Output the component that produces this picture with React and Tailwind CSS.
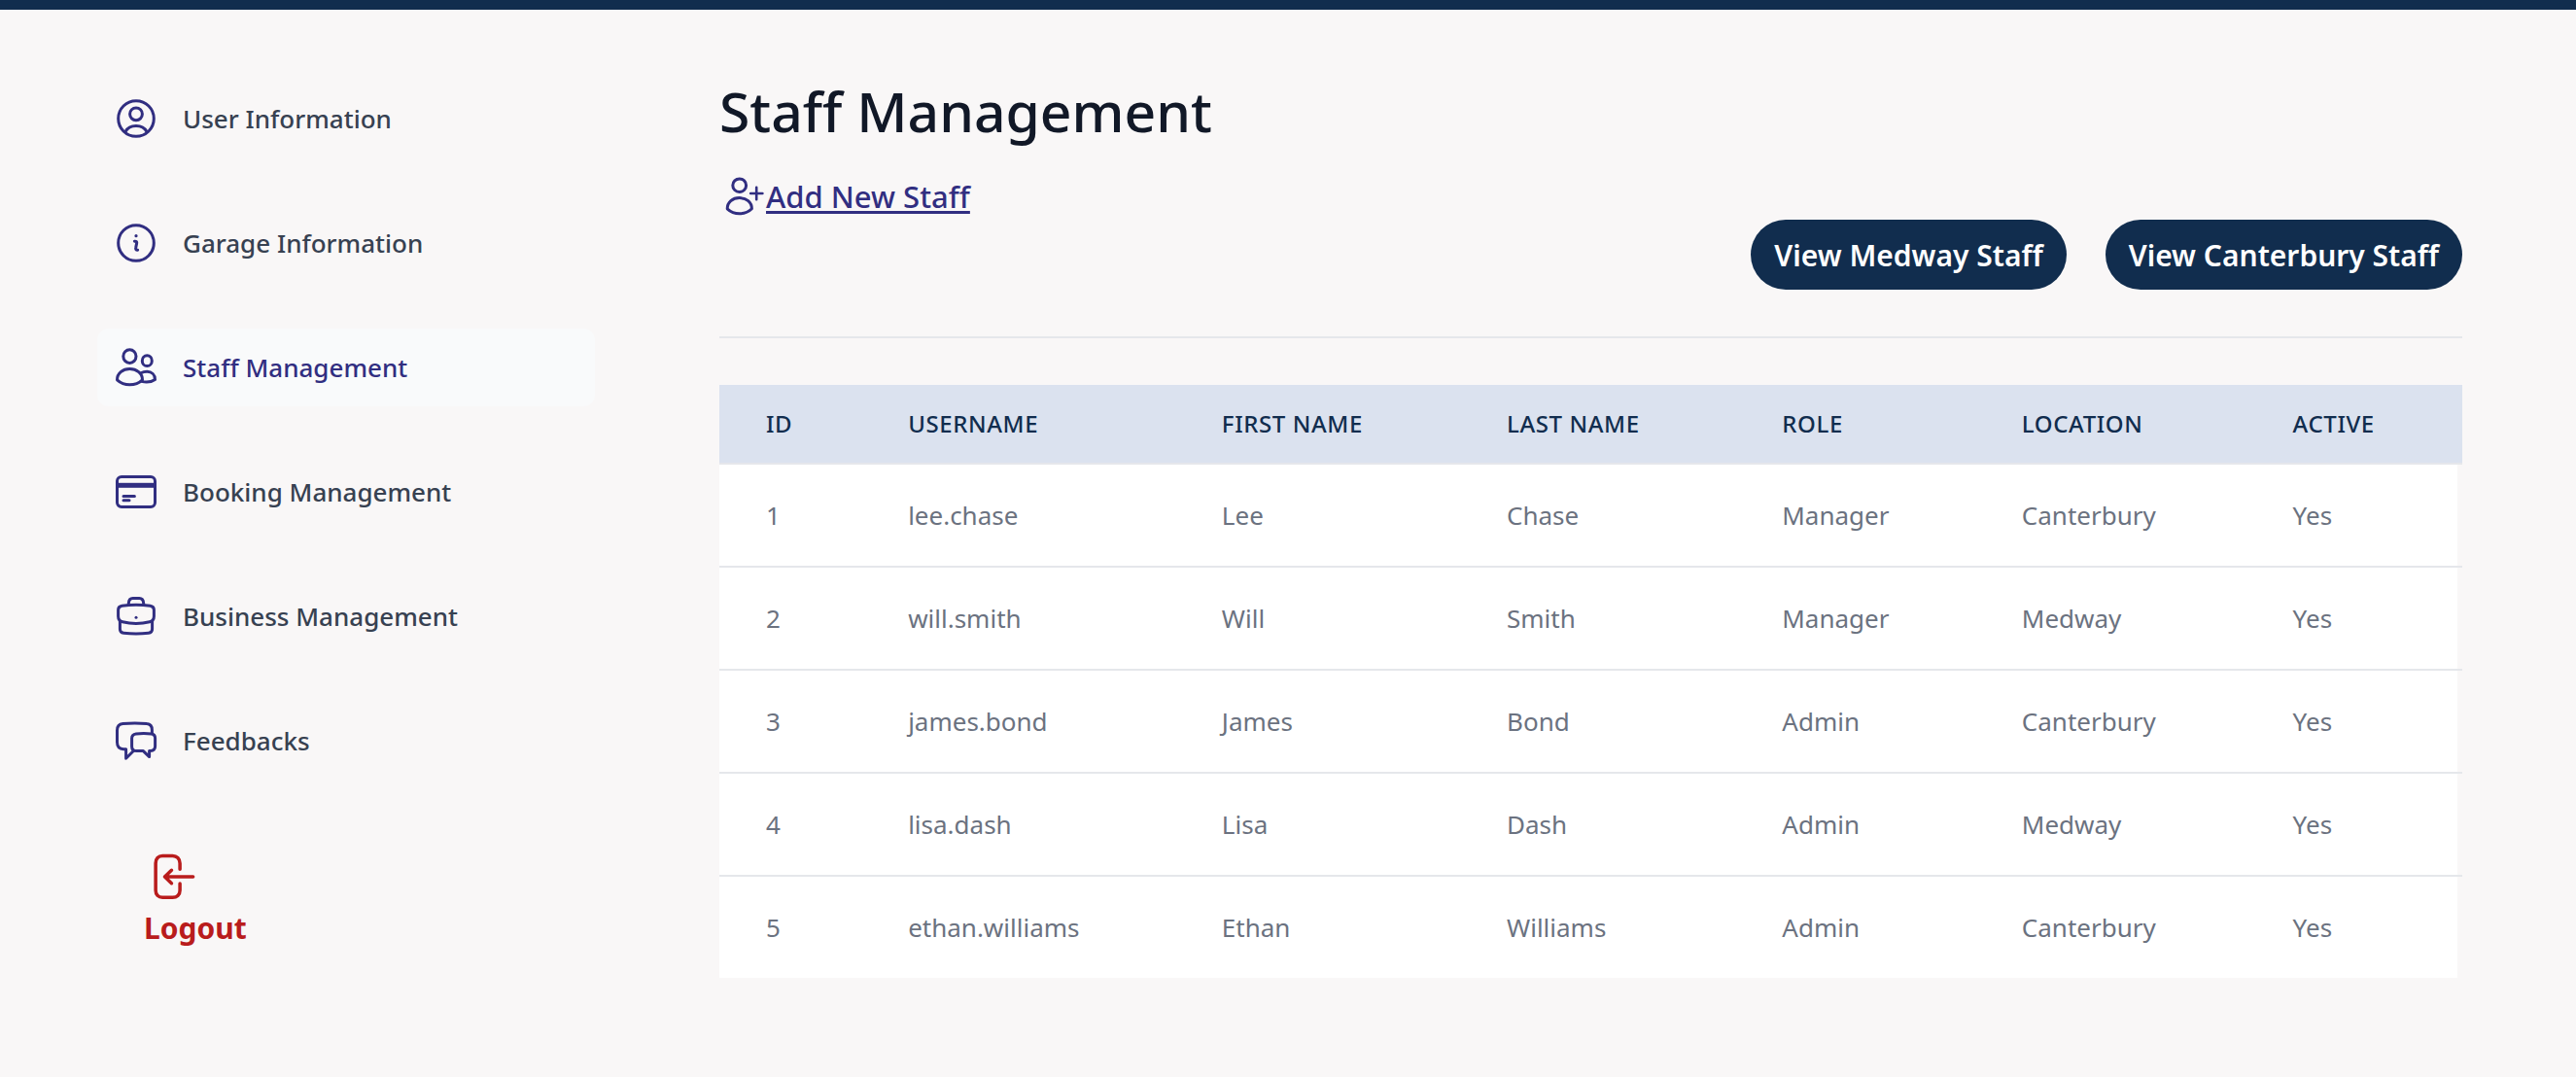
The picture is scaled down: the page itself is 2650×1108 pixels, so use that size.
function Icon({ children, className = "size-12", stroke = 3 }) {
  return (
    <svg
      viewBox="0 0 48 48"
      className={`shrink-0 ${className}`}
      fill="none"
      stroke="currentColor"
      strokeWidth={stroke}
      strokeLinecap="round"
      strokeLinejoin="round"
      aria-hidden="true"
    >
      {children}
    </svg>
  );
}

const UserIcon = () => (
  <Icon>
    <circle cx="24" cy="24" r="18.3" />
    <circle cx="24" cy="19.3" r="6.4" />
    <path d="M13 37.5C15 33.8 19 31.6 24 31.6S33 33.8 35 37.5" />
  </Icon>
);

const InfoIcon = () => (
  <Icon>
    <circle cx="24" cy="24" r="18.3" />
    <circle cx="24" cy="16.7" r="1.6" fill="currentColor" stroke="none" />
    <path d="M22.4 22.2C24.2 22 25 22.8 24.6 24.4L23.8 28.4C23.3 30.4 24 31.3 25.6 31.2" />
  </Icon>
);

const StaffIcon = () => (
  <Icon>
    <ellipse cx="17.4" cy="12.6" rx="6.6" ry="6.8" />
    <path d="M4.5 36.8C4.5 30 10.2 25.6 17.4 25.6S30.5 30 30.5 36.8C26.8 40.4 22.3 41.8 17.4 41.8S8.2 40.2 4.5 36.8Z" />
    <ellipse cx="35.3" cy="17.2" rx="5" ry="5.4" />
    <path d="M29 29.8C30.8 28.8 33 28.3 35.3 28.3C40 28.3 43.5 31.4 43.5 36.4C39.8 39 34.4 39.6 29.6 38.4" />
  </Icon>
);

const CardIcon = () => (
  <Icon>
    <rect x="4.5" y="8.5" width="39" height="31" rx="4.5" />
    <rect x="4.5" y="14.8" width="39" height="5" fill="currentColor" stroke="none" />
    <path d="M11 28.4H22.4M11 32.8H17" />
  </Icon>
);

const BriefcaseIcon = () => (
  <Icon>
    <path d="M16.3 12.2V10.6C16.6 7.2 18.2 5.6 20.6 5.6H27.4C29.8 5.6 31.4 7.2 31.7 10.6V12.2" />
    <path d="M9.5 13.3C19 12 29 12 38.5 13.3C41.4 13.7 42.4 15 42.4 17.6V24C42.4 27.3 41.2 29 38 29.8C29 32 19 32 10 29.8C6.8 29 5.6 27.3 5.6 24V17.6C5.6 15 6.6 13.7 9.5 13.3Z" />
    <path d="M7.4 29V37.2C7.4 39.8 8.6 40.9 11.2 41.2C19.6 42.2 28.4 42.2 36.8 41.2C39.4 40.9 40.6 39.8 40.6 37.2V29" />
    <circle cx="24" cy="25.3" r="1.5" fill="currentColor" stroke="none" />
  </Icon>
);

const ChatIcon = () => (
  <Icon>
    <path d="M40.4 16.2V13C40.4 9 38.6 6.9 35 6.6C26.8 5.7 18.4 5.7 10.4 6.6C6.4 7 4.5 9.2 4.5 13.4V25.6C4.5 30.2 6.6 32.6 11 32.7L13.6 32.8V42.2L21.6 34.2" />
    <path d="M24 17C29 16.4 34.6 16.4 39.6 17C42.2 17.3 43.6 18.8 43.6 21.4V29.8C43.6 32.8 41.8 34.4 38.8 34.5L37.6 34.6V40.6L31.4 34.6H24.4C21.2 34.6 19.6 33 19.6 30V21.6C19.6 18.8 21 17.4 24 17Z" />
  </Icon>
);

const AddUserIcon = () => (
  <Icon>
    <ellipse cx="20.7" cy="12.7" rx="6.9" ry="6.8" />
    <path d="M8.2 36.8C8.2 30 13.6 25.6 20.7 25.6S33.4 30 33.4 36.8C29.8 40.4 25.5 41.8 20.7 41.8S11.8 40.2 8.2 36.8Z" />
    <path d="M38.2 14.8V27.2M32.2 21H44.4" strokeWidth="2.6" />
  </Icon>
);

const LogoutIcon = () => (
  <Icon className="size-14" stroke={3}>
    <path d="M31.8 17.4V12.2C31.8 8 29 5.6 25.4 5.6H16.4C12.8 5.6 10.4 8 10.4 12V36C10.4 40 12.8 42.2 16.4 42.2H25.4C29 42.2 31.8 40 31.8 36V30" />
    <path d="M43.4 24H18.4M24.4 18.2L18.4 24L24.4 29.8" />
  </Icon>
);

const nav = [
  { label: "User Information", icon: UserIcon },
  { label: "Garage Information", icon: InfoIcon },
  { label: "Staff Management", icon: StaffIcon, active: true },
  { label: "Booking Management", icon: CardIcon },
  { label: "Business Management", icon: BriefcaseIcon },
  { label: "Feedbacks", icon: ChatIcon },
];

const columns = [
  { label: "ID", width: "w-[8.15%]" },
  { label: "Username", width: "w-[18%]" },
  { label: "First Name", width: "w-[16.35%]" },
  { label: "Last Name", width: "w-[15.8%]" },
  { label: "Role", width: "w-[13.75%]" },
  { label: "Location", width: "w-[15.55%]" },
  { label: "Active", width: "w-[12.4%]" },
];

const staff = [
  ["1", "lee.chase", "Lee", "Chase", "Manager", "Canterbury", "Yes"],
  ["2", "will.smith", "Will", "Smith", "Manager", "Medway", "Yes"],
  ["3", "james.bond", "James", "Bond", "Admin", "Canterbury", "Yes"],
  ["4", "lisa.dash", "Lisa", "Dash", "Admin", "Medway", "Yes"],
  ["5", "ethan.williams", "Ethan", "Williams", "Admin", "Canterbury", "Yes"],
];

function Sidebar() {
  return (
    <aside className="w-[512px] shrink-0 pt-[72px]">
      <nav className="flex flex-col gap-12">
        {nav.map(({ label, icon: Glyph, active }) => (
          <a
            key={label}
            href="#"
            aria-current={active ? "page" : undefined}
            className={`flex items-center gap-6 rounded-xl p-4 text-[26px] leading-[48px] font-medium ${
              active ? "bg-[#f9fafb] text-[#312e81]" : "text-[#374151]"
            }`}
          >
            <span className="text-[#312e81]">
              <Glyph />
            </span>
            {label}
          </a>
        ))}
      </nav>
      <button
        type="button"
        className="mt-[72px] ml-12 flex flex-col items-start text-[30px] leading-[50px] font-bold text-[#b91c1c]"
      >
        <LogoutIcon />
        Logout
      </button>
    </aside>
  );
}

function StaffTable() {
  return (
    <table className="mt-12 w-full table-fixed border-separate border-spacing-0 text-left">
      <thead className="bg-[#dbe2ef]">
        <tr>
          {columns.map(({ label, width }) => (
            <th
              key={label}
              scope="col"
              className={`${width} border-b-2 border-[#e5e7eb] py-6 pl-12 text-2xl leading-8 font-medium tracking-wide text-[#112d4e] uppercase`}
            >
              {label}
            </th>
          ))}
        </tr>
      </thead>
      <tbody>
        {staff.map((row, r) => (
          <tr key={row[0]}>
            {row.map((value, c) => (
              <td
                key={c}
                className={`py-8 pl-12 text-[26px] leading-10 text-[#6b7280] ${
                  r < staff.length - 1 ? "border-b-2 border-[#e5e7eb]" : ""
                } ${
                  c === row.length - 1
                    ? "bg-linear-to-r from-white to-white bg-[length:calc(100%_-_5px)_100%] bg-no-repeat"
                    : "bg-white"
                }`}
              >
                {value}
              </td>
            ))}
          </tr>
        ))}
      </tbody>
    </table>
  );
}

export default function App() {
  return (
    <div className="min-h-screen border-t-[10px] border-[#112d4e] bg-[#f9f7f7] font-['Noto_Sans',sans-serif]">
      <div className="flex gap-32 pr-[117px] pb-16 pl-[100px]">
        <Sidebar />
        <main className="min-w-0 flex-1 pt-[68px]">
          <header className="border-b-2 border-[#e5e7eb] pb-12">
            <h1 className="text-[57px] leading-[72px] font-medium text-[#111827]">
              Staff Management
            </h1>
            <a
              href="#"
              className="mt-7 flex w-fit items-center text-[31px] leading-[48px] font-medium text-[#312e81]"
            >
              <AddUserIcon />
              <span className="underline decoration-[3px] underline-offset-3">Add New Staff</span>
            </a>
            <div className="flex justify-end gap-10">
              {["View Medway Staff", "View Canterbury Staff"].map((label) => (
                <button
                  key={label}
                  type="button"
                  className="rounded-full bg-[#112d4e] px-6 pt-[13px] pb-[11px] text-[30px] leading-[48px] font-semibold text-white"
                >
                  {label}
                </button>
              ))}
            </div>
          </header>
          <StaffTable />
        </main>
      </div>
    </div>
  );
}
